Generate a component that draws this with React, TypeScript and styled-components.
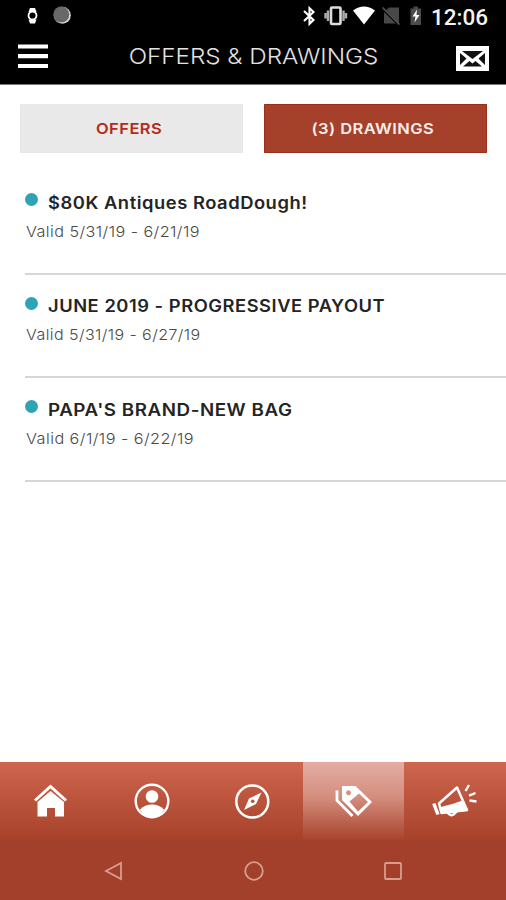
import React from "react";
import styled, { createGlobalStyle } from "styled-components";

const Global = createGlobalStyle`
  *, *::before, *::after { box-sizing: border-box; }
  html, body { margin: 0; background: #fff; }
  body { font-family: Inter, "Open Sans", sans-serif; overflow: hidden; }
  button { border: 0; padding: 0; margin: 0; font-family: inherit; background: none; }
`;

const Screen = styled.div`
  display: flex;
  flex-direction: column;
  width: 506px;
  height: 900px;
  background: #fff;
`;

const Header = styled.header`
  height: 85px;
  background: #000;
  border-bottom: 1px solid #777;
  display: flex;
  flex-direction: column;
`;

const StatusBar = styled.div`
  height: 30px;
  display: flex;
  align-items: center;
  justify-content: space-between;
  padding: 2px 18px 0 24px;
`;

const StatusGroup = styled.div`
  display: flex;
  align-items: center;
`;

const Clock = styled.span`
  color: #f4f4f4;
  font: 500 22.5px/28px Roboto, sans-serif;
  margin-top: 2px;
  width: 57px;
  white-space: nowrap;
`;

const TitleBar = styled.div`
  height: 54px;
  display: grid;
  grid-template-columns: 48px 1fr 48px;
  padding: 0 17px 0 18px;
`;

const IconButton = styled.button<{ $end?: boolean }>`
  display: flex;
  justify-content: ${(p) => (p.$end ? "flex-end" : "flex-start")};
  padding-top: ${(p) => (p.$end ? 16 : 14)}px;
`;

/* Inter is stretched horizontally to get wide geometric letterforms. */
const Title = styled.h1`
  margin: 0;
  color: #e2e2e2;
  font-size: 22px;
  font-weight: 300;
  line-height: 53px;
  justify-self: center;
  white-space: nowrap;
  transform: scaleX(1.1);
`;

const Tabs = styled.div`
  display: grid;
  grid-template-columns: 223px 223px;
  gap: 21px;
  padding: 19px 0 0 20px;
`;

const Tab = styled.button<{ $active?: boolean }>`
  height: 49px;
  border-radius: 1px;
  padding: 0 5px 1px 0;
  font-size: 15px;
  font-weight: 600;
  letter-spacing: 0.4px;
  color: ${(p) => (p.$active ? "#fdeeea" : "#b22a20")};
  background: ${(p) => (p.$active ? "#a5402b" : "#e9e9e9")};
  box-shadow: inset 0 0 0 1px ${(p) => (p.$active ? "#9c2e1c" : "#e7e7e7")};
`;

const TabLabel = styled.span`
  display: inline-block;
  transform: scaleX(1.1);
`;

const List = styled.ul`
  list-style: none;
  margin: 0;
  padding: 18px 0 0 25px;
  flex: 1;
`;

const Item = styled.li`
  height: 103.5px;
  padding-top: 18.5px;
  border-bottom: 2px solid #d6d6d6;
`;

const ItemHead = styled.div`
  display: flex;
  align-items: flex-start;
`;

const Dot = styled.span`
  width: 13px;
  height: 13px;
  margin: 3.5px 10px 0 0;
  border-radius: 50%;
  background: #2fa3b5;
`;

const ItemTitle = styled.h2<{ $stretch: number }>`
  margin: 0;
  font-size: 17px;
  line-height: 26px;
  font-weight: 600;
  letter-spacing: 0.5px;
  color: #242424;
  white-space: nowrap;
  transform: scaleX(${(p) => p.$stretch});
  transform-origin: 0 50%;
`;

const Validity = styled.p<{ $stretch: number }>`
  width: fit-content;
  margin: 4px 0 0 1px;
  font-size: 15px;
  line-height: 24px;
  font-weight: 300;
  letter-spacing: 0.4px;
  color: #4a4a4a;
  white-space: nowrap;
  transform: scaleX(${(p) => p.$stretch});
  transform-origin: 0 50%;
`;

const Footer = styled.footer`
  height: 138px;
  background: linear-gradient(#cf664f 0, #aa432b 74px, #a3402b 80px);
`;

const Nav = styled.nav`
  height: 78px;
  display: grid;
  grid-template-columns: repeat(4, 101px) 1fr;
`;

const NavItem = styled.button<{ $active?: boolean }>`
  display: flex;
  align-items: center;
  justify-content: center;
  background: ${(p) =>
    p.$active ? "linear-gradient(#e4ada3 0, #d58f80 34px, #a9452f 77px, #a6412b 78px)" : "none"};
`;

const SystemBar = styled.div`
  height: 60px;
  display: flex;
  align-items: center;
  justify-content: space-between;
  padding: 2px 103px 0 104px;
`;

const Glyph = styled.svg`
  display: block;
  flex: none;
`;

const drawings = [
  { title: "$80K Antiques RoadDough!", valid: "Valid 5/31/19 - 6/21/19", titleStretch: 1.079, validStretch: 1.08 },
  { title: "JUNE 2019 - PROGRESSIVE PAYOUT", valid: "Valid 5/31/19 - 6/27/19", titleStretch: 1.077, validStretch: 1.068 },
  { title: "PAPA'S BRAND-NEW BAG", valid: "Valid 6/1/19 - 6/22/19", titleStretch: 1.103, validStretch: 1.084 },
];

function StatusIcons() {
  return (
    <Glyph width="128" height="26" viewBox="0 0 128 26">
      <path d="M1 8 10.500 17 6.500 20.800V5.200L10.500 9 1 18" fill="none" stroke="#fff" strokeWidth="2.100" />
      <g fill="none" stroke="#ddd">
        <rect x="28" y="4.500" width="9.500" height="16.500" rx="1" strokeWidth="2.600" />
        <path d="M25 7.500v10.500M40.500 7.500v10.500M22.500 10v5.500M43 10v5.500" stroke="#aaa" strokeWidth="2.400" />
      </g>
      <path d="M50 7.500q11-8 22 0L61 21.500Z" fill="#fff" />
      <path d="M81 9.500l5-5h10v16H81Z" fill="#484848" />
      <path d="M80 6l16 16" stroke="#0c0c0c" strokeWidth="2.500" />
      <path d="M79.500 4.500l17 17" stroke="#555" strokeWidth="1.600" />
      <path d="M107.500 5.500h3V3.500h4.500v2h3v16.500h-10.500Z" fill="#4b4b4b" />
      <path d="M114 6.500l-4.500 7h3l-1 6 5-7.500h-3Z" fill="#fff" />
    </Glyph>
  );
}

function NotificationIcons() {
  return (
    <Glyph width="50" height="24" viewBox="0 0 50 24">
      <path d="M6 4h5l1.500 4h-8ZM6 19.500h5l1.500-4h-8Z" fill="#fff" />
      <circle cx="8.500" cy="11.500" r="4" fill="#000" stroke="#fff" strokeWidth="1.800" />
      <circle cx="38.300" cy="11.300" r="8.500" fill="#ddd" />
      <circle cx="37.300" cy="10.500" r="8" fill="#686868" />
    </Glyph>
  );
}

function HomeIcon() {
  return (
    <Glyph width="36" height="36" viewBox="0 0 36 36">
      <path d="M2 17.500 17.500 3.500l15.500 14" fill="none" stroke="#fff" strokeWidth="3" />
      <path d="M4.500 19 17.500 8 31 19V33.500h-9v-8.500h-8v8.500H4.500Z" fill="#fff" />
    </Glyph>
  );
}

function ProfileIcon() {
  return (
    <Glyph width="36" height="36" viewBox="0 0 36 36">
      <circle cx="18" cy="18" r="16.300" fill="none" stroke="#fff" strokeWidth="2.400" />
      <circle cx="18" cy="13.500" r="6.300" fill="#fff" />
      <path d="M6 26.500q5-5 12-5t12 5q-4 8-12 8T6 26.500Z" fill="#fff" />
    </Glyph>
  );
}

function CompassIcon() {
  return (
    <Glyph width="36" height="36" viewBox="0 0 36 36">
      <circle cx="17.300" cy="18.500" r="16" fill="none" stroke="#fff" strokeWidth="2.500" />
      <path d="M26.500 9.500 14 15.500 9 27l12-6Z" fill="#fff" />
      <circle cx="17.700" cy="18.300" r="1.800" fill="#b75038" />
    </Glyph>
  );
}

function TagsIcon() {
  return (
    <Glyph width="38" height="36" viewBox="0 0 38 36">
      <path
        fillRule="evenodd"
        fill="#fff"
        d="M7 3H20.500L37 19 23 33 7 17ZM14.500 18.500l8.500 10L33 19 24 10.500ZM13.500 7.200a2.500 2.500 0 1 0 .01 0Z"
      />
      <path d="M2 7.500v10L17.500 33" fill="none" stroke="#fff" strokeWidth="2.800" />
    </Glyph>
  );
}

function MegaphoneIcon() {
  return (
    <Glyph width="46" height="36" viewBox="0 0 46 36">
      <path
        d="M7 20.500 25 4.500 35 27 9.500 30Z"
        fill="none"
        stroke="#fff"
        strokeWidth="2.500"
        strokeLinejoin="round"
      />
      <path d="M7 24.500 22 20.500 31.500 17 35 28 9 31Z" fill="#fff" />
      <path d="M1.800 20.500 6 31.500" stroke="#fff" strokeWidth="3.500" />
      <path
        d="M15 28.500q4.500 8 10-1M33.500 8l3.500-6M37 12.700l6.500-2.700M37.500 17.500l7 1"
        fill="none"
        stroke="#fff"
        strokeWidth="2.400"
      />
    </Glyph>
  );
}

const tabsNav = [
  { name: "Home", Icon: HomeIcon },
  { name: "Profile", Icon: ProfileIcon },
  { name: "Explore", Icon: CompassIcon },
  { name: "Offers", Icon: TagsIcon, active: true },
  { name: "Promotions", Icon: MegaphoneIcon },
];

export default function App() {
  return (
    <>
      <Global />
      <Screen>
        <Header>
          <StatusBar>
            <NotificationIcons />
            <StatusGroup>
              <StatusIcons />
              <Clock>12:06</Clock>
            </StatusGroup>
          </StatusBar>
          <TitleBar>
            <IconButton aria-label="Menu">
              <Glyph width="30" height="25" viewBox="0 0 30 25">
                <path d="M0 2.500h30M0 12.200h30M0 22h30" stroke="#fff" strokeWidth="4.200" />
              </Glyph>
            </IconButton>
            <Title>OFFERS &amp; DRAWINGS</Title>
            <IconButton $end aria-label="Messages">
              <Glyph width="33" height="25" viewBox="0 0 33 25">
                <path d="M0 0h33v25H0Z" fill="#fff" />
                <path
                  d="M6 5h21l-10.500 8ZM4 7l6.500 5.500L4 19ZM29 7l-6.500 5.500L29 19ZM7 20.500l6.500-5.500 3 2.500 3-2.500 6.500 5.500Z"
                  fill="#111"
                />
              </Glyph>
            </IconButton>
          </TitleBar>
        </Header>
        <Tabs>
          <Tab>
            <TabLabel>OFFERS</TabLabel>
          </Tab>
          <Tab $active>
            <TabLabel>(3) DRAWINGS</TabLabel>
          </Tab>
        </Tabs>
        <List>
          {drawings.map((d) => (
            <Item key={d.title}>
              <ItemHead>
                <Dot />
                <ItemTitle $stretch={d.titleStretch}>{d.title}</ItemTitle>
              </ItemHead>
              <Validity $stretch={d.validStretch}>{d.valid}</Validity>
            </Item>
          ))}
        </List>
        <Footer>
          <Nav>
            {tabsNav.map(({ name, Icon, active }) => (
              <NavItem key={name} $active={active} aria-label={name}>
                <Icon />
              </NavItem>
            ))}
          </Nav>
          <SystemBar>
            <Glyph width="20" height="20" viewBox="0 0 20 20">
              <path d="M2 10 17 2v16Z" fill="none" stroke="#d99d90" strokeWidth="1.800" />
            </Glyph>
            <Glyph width="20" height="20" viewBox="0 0 20 20">
              <circle cx="10" cy="10" r="8.800" fill="none" stroke="#d99d90" strokeWidth="1.800" />
            </Glyph>
            <Glyph width="20" height="20" viewBox="0 0 20 20">
              <rect x="2" y="2" width="16" height="16" rx="1" fill="none" stroke="#d99d90" strokeWidth="1.800" />
            </Glyph>
          </SystemBar>
        </Footer>
      </Screen>
    </>
  );
}
